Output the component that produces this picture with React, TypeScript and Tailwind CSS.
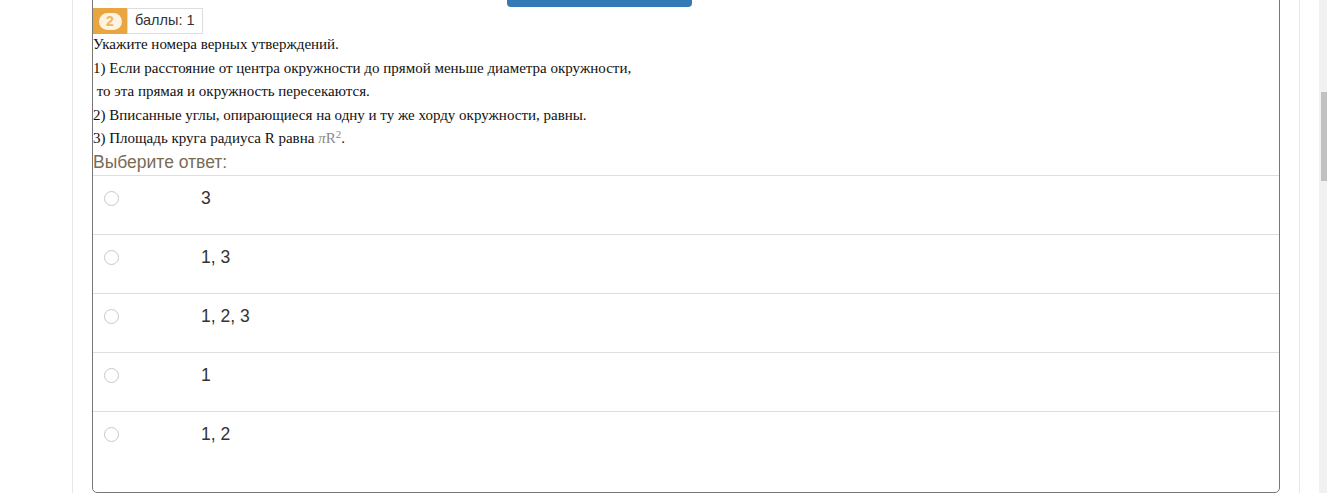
import React from 'react';

const answers = ['3', '1, 3', '1, 2, 3', '1', '1, 2'];

export default function App() {
  return (
    <div className="relative flex h-[493px] w-[1327px] overflow-hidden bg-white">
      {/* page column */}
      <div className="ml-[72px] w-[1228px] border-x border-[#e6e6e6] px-[19px]">
        <div className="-mt-[30px] flex h-[523px] flex-col rounded-b-[5px] border border-[#777] bg-white">
          {/* submit button peeking from above */}
          <div className="ml-[414px] h-[36px] w-[185px] rounded-b-[4px] bg-[#337ab7]" />

          {/* question number and points */}
          <div className="mt-px flex h-[26px] items-stretch">
            <div className="flex w-[34px] items-center justify-center bg-[#e9a53f]">
              <span className="flex h-[17px] w-[23px] items-center justify-center rounded-full bg-[#fdf3e3] text-[14px] font-bold leading-none [font-family:'Liberation_Sans',Arial,sans-serif]">
                <span className="text-[#f2b45c]">2</span>
              </span>
            </div>
            <div className="flex items-center border border-[#ddd] px-[7px] text-[14.5px] text-[#333] [font-family:'Liberation_Sans',Arial,sans-serif]">
              баллы: 1
            </div>
          </div>

          {/* question text */}
          <div className="-mt-px text-[15px] leading-[23.5px] text-[#111] [font-family:'Liberation_Serif','Times_New_Roman',serif]">
            <p>Укажите номера верных утверждений.</p>
            <p>1) Если расстояние от центра окружности до прямой меньше диаметра окружности,</p>
            <p>&nbsp;то эта прямая и окружность пересекаются.</p>
            <p>2) Вписанные углы, опирающиеся на одну и ту же хорду окружности, равны.</p>
            <p>
              3) Площадь круга радиуса R равна{' '}
              <span className="italic text-[#888]">π</span>
              <span className="text-[#888]">R</span>
              <sup className="text-[11px] leading-none text-[#888]">2</sup>.
            </p>
          </div>

          <div className="h-[24px] text-[17.5px] leading-[22px] text-[#7a6b55] [font-family:'Liberation_Sans',Arial,sans-serif]">
            Выберите ответ:
          </div>

          {/* answer options */}
          <div className="flex flex-col">
            {answers.map((a) => (
              <label
                key={a}
                className="flex h-[59px] items-start border-t border-[#dedede] pt-[13px] text-[17.5px] text-[#333] [font-family:'Liberation_Sans',Arial,sans-serif]"
              >
                <span className="ml-[11px] mt-[2px] h-[15px] w-[15px] rounded-full border border-[#c8c8c8] bg-white" />
                <span className="ml-[82px] leading-[18px]">{a}</span>
              </label>
            ))}
          </div>
        </div>
      </div>

      {/* scrollbar */}
      <div className="ml-[19px] h-full w-[8px] bg-[#f1f1f1] pt-[92px] pl-[2px]">
        <div className="h-[89px] w-full bg-[#c1c1c1]" />
      </div>
    </div>
  );
}
